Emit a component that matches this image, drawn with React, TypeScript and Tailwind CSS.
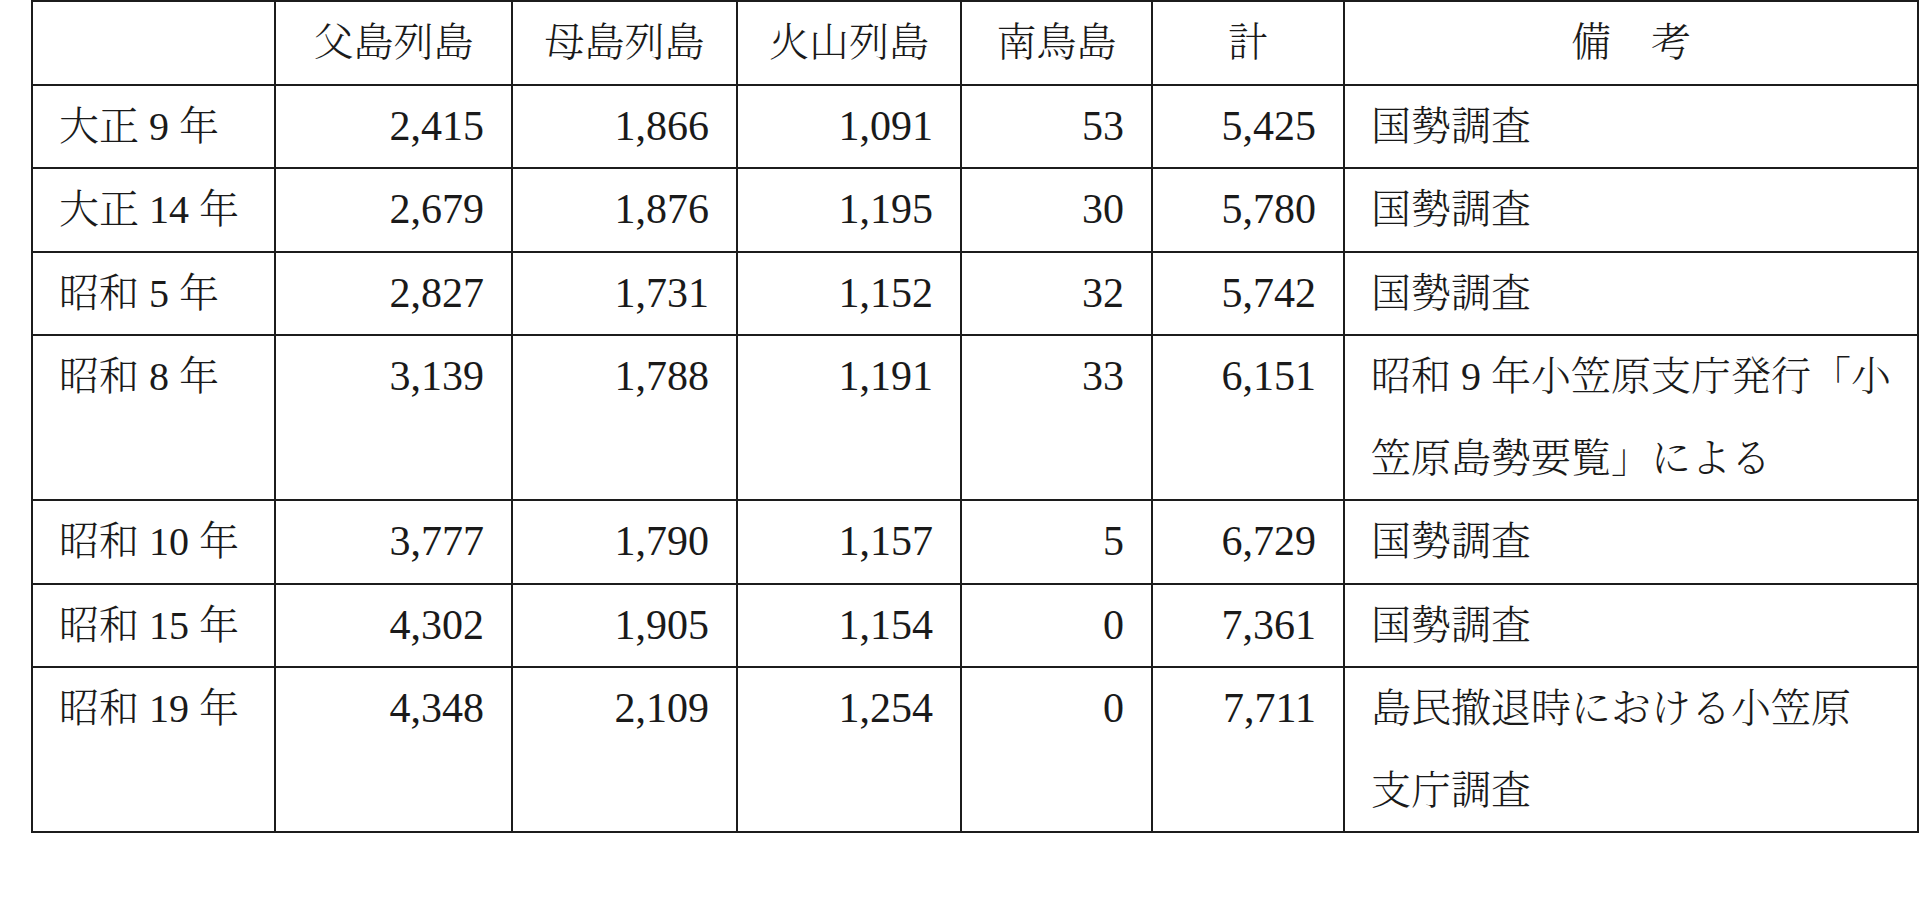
const COLS = [243, 237, 225, 224, 191, 192, 574];

const HEAD = ["", "父島列島", "母島列島", "火山列島", "南鳥島", "計", "備　考"];

type Row = { year: string; nums: string[]; note: string[] };

const ROWS: Row[] = [
  { year: "大正 9 年", nums: ["2,415", "1,866", "1,091", "53", "5,425"], note: ["国勢調査"] },
  { year: "大正 14 年", nums: ["2,679", "1,876", "1,195", "30", "5,780"], note: ["国勢調査"] },
  { year: "昭和 5 年", nums: ["2,827", "1,731", "1,152", "32", "5,742"], note: ["国勢調査"] },
  {
    year: "昭和 8 年",
    nums: ["3,139", "1,788", "1,191", "33", "6,151"],
    note: ["昭和 9 年小笠原支庁発行「小", "笠原島勢要覧」による"],
  },
  { year: "昭和 10 年", nums: ["3,777", "1,790", "1,157", "5", "6,729"], note: ["国勢調査"] },
  { year: "昭和 15 年", nums: ["4,302", "1,905", "1,154", "0", "7,361"], note: ["国勢調査"] },
  {
    year: "昭和 19 年",
    nums: ["4,348", "2,109", "1,254", "0", "7,711"],
    note: ["島民撤退時における小笠原", "支庁調査"],
  },
];

const cell = "border-2 border-[#1c1c1c] px-[26px] py-0 align-top";

export default function App() {
  return (
    <div className="min-h-[912px] w-full bg-white pl-[31px] font-['Liberation_Serif','Noto_Serif_CJK_JP','Noto_Sans_CJK_JP',serif] text-[40px] font-light leading-[81.5px] text-[#1a1a1a]">
      <table className="table-fixed border-collapse" style={{ width: 1887 }}>
        <colgroup>
          {COLS.map((w, i) => (
            <col key={i} style={{ width: w }} />
          ))}
        </colgroup>
        <thead>
          <tr>
            {HEAD.map((h, i) => (
              <th key={i} className={`${cell} text-center font-light`}>
                {h}
              </th>
            ))}
          </tr>
        </thead>
        <tbody>
          {ROWS.map((r) => (
            <tr key={r.year}>
              <td className={`${cell} text-left whitespace-nowrap`}>{r.year}</td>
              {r.nums.map((n, i) => (
                <td key={i} className={`${cell} pr-[27px] text-right text-[42px]`}>
                  {n}
                </td>
              ))}
              <td className={`${cell} text-left whitespace-nowrap`}>
                {r.note.map((line, i) => (
                  <div key={i}>{line}</div>
                ))}
              </td>
            </tr>
          ))}
        </tbody>
      </table>
    </div>
  );
}
